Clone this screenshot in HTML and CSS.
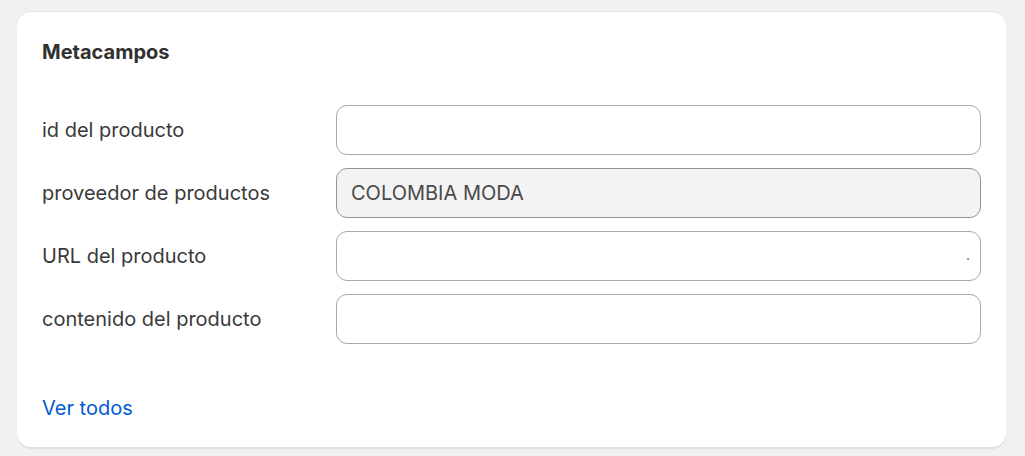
FILE: index.html
```html
<!DOCTYPE html>
<html lang="es">

<head>
  <meta charset="UTF-8" />
  <meta name="viewport" content="width=device-width, initial-scale=1.0" />
  <title>Metacampos</title>
  <link rel="stylesheet" href="styles.css">
</head>

<body>
  <div class="card">
    <h2 class="card-title">Metacampos</h2>

    <div class="fields">
      <label class="field-label" for="f-id">id del producto</label>
      <div class="field-box"><input class="field-input" id="f-id" type="text" value=""></div>

      <label class="field-label" for="f-vendor">proveedor de productos</label>
      <div class="field-box disabled"><input class="field-input" id="f-vendor" type="text" value="COLOMBIA MODA" disabled></div>

      <label class="field-label" for="f-url">URL del producto</label>
      <div class="field-box"><input class="field-input" id="f-url" type="text" value=""><span class="field-dot">.</span></div>

      <label class="field-label" for="f-content">contenido del producto</label>
      <div class="field-box"><input class="field-input" id="f-content" type="text" value=""></div>
    </div>

    <a class="see-all" href="#">Ver todos</a>
  </div>
</body>

</html>
```

FILE: styles.css
```css
body {
  margin: 0;
  padding: 11px 19px 8px 17px;
  background: #f1f1f1;
  font-family: Inter, "Noto Sans", sans-serif;
  color: #303030;
}

.card {
  background: #fff;
  border-radius: 14px;
  padding: 28px 25px 27px;
  box-shadow: 0 1px 0 rgba(26, 26, 26, 0.07), 0 1px 0 rgba(204, 204, 204, 0.5) inset, 0 -1px 0 rgba(0, 0, 0, 0.12) inset;
  height: 437px;
  box-sizing: border-box;
  display: flex;
  flex-direction: column;
}

.card-title {
  margin: 0;
  font-size: 20px;
  line-height: 26px;
  font-weight: 700;
  color: #303030;
}

.fields {
  display: grid;
  grid-template-columns: 294px 1fr;
  row-gap: 13px;
  align-items: center;
  margin-top: 40px;
}

.field-label {
  font-size: 20px;
  line-height: 26px;
  color: #3a3a3a;
}

.field-box {
  position: relative;
  height: 50px;
  border: 1px solid #a8a8a8;
  border-radius: 11px;
  background: #fff;
  box-sizing: border-box;
  display: flex;
  align-items: center;
}

.field-box.disabled {
  background: #f3f3f3;
  border-color: #959595;
}

.field-input {
  flex: 1;
  border: 0;
  outline: 0;
  background: transparent;
  padding: 0 14px;
  font-family: inherit;
  font-size: 20px;
  color: #303030;
}

.field-input:disabled {
  color: #4a4a4a;
}

.field-dot {
  position: absolute;
  right: 10px;
  top: 14px;
  font-size: 14px;
  color: #555;
}

.see-all {
  margin-top: auto;
  font-size: 20px;
  line-height: 26px;
  color: #005bd3;
  text-decoration: none;
  align-self: flex-start;
}
```
